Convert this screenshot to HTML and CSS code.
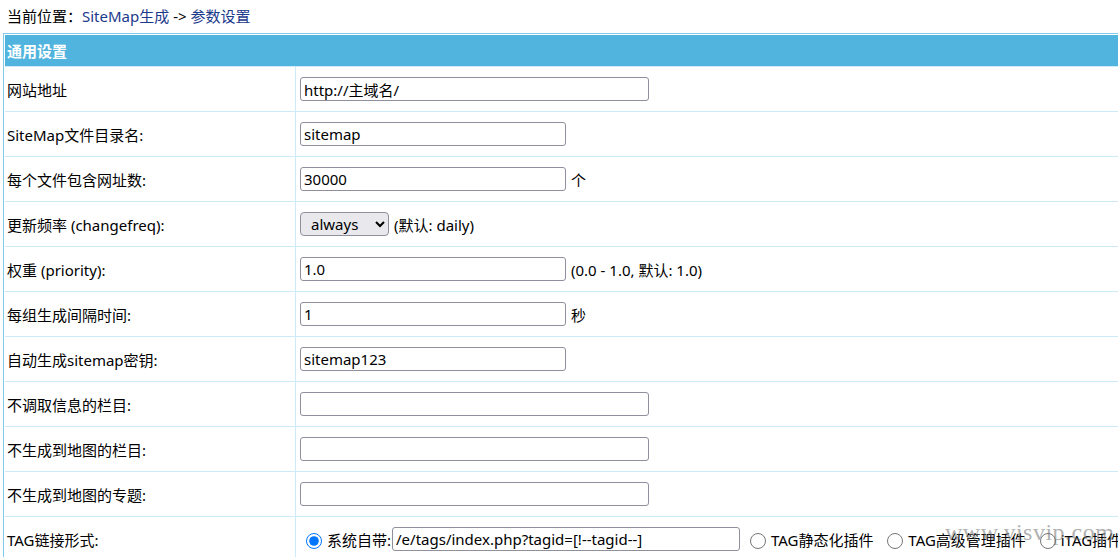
FILE: index.html
```html
<!DOCTYPE html>
<html>

<head>
    <meta charset="utf-8">
    <link rel="stylesheet" href="styles.css">
</head>

<body>
    <div class="position">当前位置：<a href="#">SiteMap生成</a> -&gt; <a href="#">参数设置</a></div>

    <form class="setform">
        <table class="tableborder">
            <colgroup>
                <col class="col-label">
                <col>
            </colgroup>
            <tr>
                <th colspan="2" class="header">通用设置</th>
            </tr>
            <tr>
                <td class="label">网站地址</td>
                <td><input type="text" class="inp-long" value="http://主域名/"></td>
            </tr>
            <tr>
                <td class="label">SiteMap文件目录名:</td>
                <td><input type="text" class="inp-short" value="sitemap"></td>
            </tr>
            <tr>
                <td class="label">每个文件包含网址数:</td>
                <td><input type="text" class="inp-short" value="30000"><span class="tip">个</span></td>
            </tr>
            <tr>
                <td class="label">更新频率 (changefreq):</td>
                <td>
                    <select class="sel">
                        <option>always</option>
                        <option>hourly</option>
                        <option>daily</option>
                        <option>weekly</option>
                        <option>monthly</option>
                        <option>yearly</option>
                        <option>never</option>
                    </select><span class="tip">(默认: daily)</span>
                </td>
            </tr>
            <tr>
                <td class="label">权重 (priority):</td>
                <td><input type="text" class="inp-short" value="1.0"><span class="tip">(0.0 - 1.0, 默认: 1.0)</span></td>
            </tr>
            <tr>
                <td class="label">每组生成间隔时间:</td>
                <td><input type="text" class="inp-short" value="1"><span class="tip">秒</span></td>
            </tr>
            <tr>
                <td class="label">自动生成sitemap密钥:</td>
                <td><input type="text" class="inp-short" value="sitemap123"></td>
            </tr>
            <tr>
                <td class="label">不调取信息的栏目:</td>
                <td><input type="text" class="inp-long" value=""></td>
            </tr>
            <tr>
                <td class="label">不生成到地图的栏目:</td>
                <td><input type="text" class="inp-long" value=""></td>
            </tr>
            <tr>
                <td class="label">不生成到地图的专题:</td>
                <td><input type="text" class="inp-long" value=""></td>
            </tr>
            <tr>
                <td class="label">TAG链接形式:</td>
                <td>
                    <label class="opt first"><input type="radio" name="tagurl" checked>系统自带:</label><input type="text" class="inp-tag" value="/e/tags/index.php?tagid=[!--tagid--]">
                    <label class="opt"><input type="radio" name="tagurl">TAG静态化插件</label>
                    <label class="opt"><input type="radio" name="tagurl">TAG高级管理插件</label>
                    <label class="opt"><input type="radio" name="tagurl">iTAG插件</label>
                </td>
            </tr>
        </table>
    </form>

    <div class="watermark">www.yisvip.com</div>
</body>

</html>
```

FILE: styles.css
```css
html,
body {
    margin: 0;
    padding: 0;
    overflow: hidden;
}

body {
    position: relative;
    width: 1118px;
    height: 557px;
    background: #fff;
    color: #000;
    font-family: "Noto Sans", "Noto Sans CJK SC", sans-serif;
    font-size: 15px;
}

.position {
    height: 33px;
    line-height: 33px;
    padding-left: 7px;
    white-space: nowrap;
}

.position a {
    color: #1b3a8c;
    text-decoration: none;
}

.setform {
    margin: 0;
}

.tableborder {
    width: 1120px;
    margin-left: 3px;
    border: 1px solid #82c9ea;
    padding: 1px;
    border-spacing: 0;
    border-collapse: separate;
    table-layout: fixed;
    background: #fff;
}

.col-label {
    width: 291px;
}

.header {
    height: 31px;
    padding: 0 0 0 2px;
    background: #51b4de;
    color: #fff;
    font-weight: bold;
    text-align: left;
    border-bottom: 1px solid #cdeaf8;
}

.tableborder td {
    height: 44px;
    padding: 0 0 0 4px;
    border-bottom: 1px solid #cdeaf8;
    white-space: nowrap;
    overflow: hidden;
}

.tableborder td.label {
    padding-left: 2px;
    border-right: 1px solid #cdeaf8;
}

input[type="text"] {
    box-sizing: border-box;
    height: 24px;
    margin: 0;
    padding: 0 3px;
    border: 1px solid #8f8f9d;
    border-radius: 3px;
    font-family: inherit;
    font-size: 15px;
    color: #000;
    vertical-align: middle;
}

.inp-long {
    width: 349px;
}

.inp-short {
    width: 266px;
}

.inp-tag {
    width: 348px;
}

.sel {
    box-sizing: border-box;
    width: 89px;
    height: 24px;
    margin: 0;
    padding: 0 4px 0 6px;
    border: 1px solid #8f8f9d;
    border-radius: 4px;
    background-color: #e9e9ed;
    font-family: inherit;
    font-size: 15px;
    color: #000;
    vertical-align: middle;
}

.tip {
    margin-left: 5px;
    vertical-align: middle;
}

.opt {
    vertical-align: middle;
    margin-right: 4px;
}

.opt.first {
    margin-right: 1px;
}

.opt input {
    width: 16px;
    height: 16px;
    margin: 0 5px 0 6px;
    vertical-align: -3px;
}

.watermark {
    position: absolute;
    left: 945px;
    top: 519px;
    font-family: "Liberation Serif", serif;
    font-size: 24px;
    letter-spacing: 0.5px;
    color: rgba(110, 110, 110, 0.55);
    pointer-events: none;
}
```
